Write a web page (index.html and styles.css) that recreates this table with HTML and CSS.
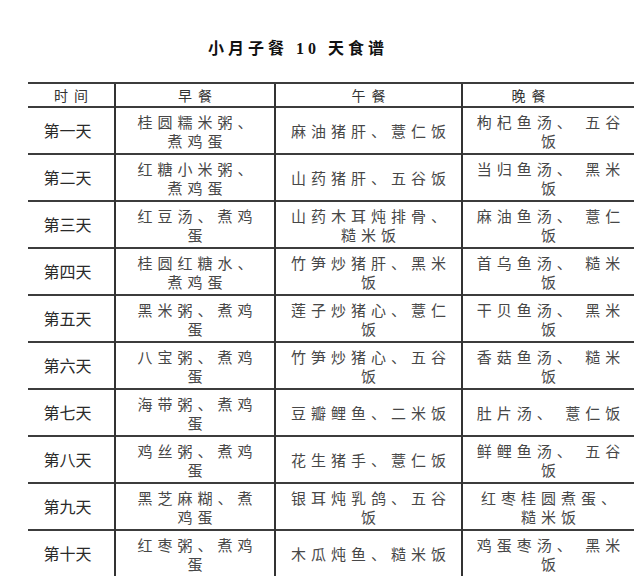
FILE: index.html
```html
<!DOCTYPE html>
<html lang="zh">
<head>
<meta charset="utf-8">
<link rel="stylesheet" href="styles.css">
</head>
<body>
<h1 class="title">小月子餐 10 天食谱</h1>
<table class="menu">
  <colgroup>
    <col class="c-day"><col class="c-b"><col class="c-l"><col class="c-d">
  </colgroup>
  <thead>
    <tr><th>时间</th><th>早餐</th><th>午餐</th><th class="h-dinner">晚餐</th></tr>
  </thead>
  <tbody>
    <tr><td class="day">第一天</td><td>桂圆糯米粥、<br>煮鸡蛋</td><td>麻油猪肝、薏仁饭</td><td>枸杞鱼汤、 五谷<br>饭</td></tr>
    <tr><td class="day">第二天</td><td>红糖小米粥、<br>煮鸡蛋</td><td>山药猪肝、五谷饭</td><td>当归鱼汤、 黑米<br>饭</td></tr>
    <tr><td class="day">第三天</td><td>红豆汤、煮鸡<br>蛋</td><td>山药木耳炖排骨、<br>糙米饭</td><td>麻油鱼汤、 薏仁<br>饭</td></tr>
    <tr><td class="day">第四天</td><td>桂圆红糖水、<br>煮鸡蛋</td><td>竹笋炒猪肝、黑米<br>饭</td><td>首乌鱼汤、 糙米<br>饭</td></tr>
    <tr><td class="day">第五天</td><td>黑米粥、煮鸡<br>蛋</td><td>莲子炒猪心、薏仁<br>饭</td><td>干贝鱼汤、 黑米<br>饭</td></tr>
    <tr><td class="day">第六天</td><td>八宝粥、煮鸡<br>蛋</td><td>竹笋炒猪心、五谷<br>饭</td><td>香菇鱼汤、 糙米<br>饭</td></tr>
    <tr><td class="day">第七天</td><td>海带粥、煮鸡<br>蛋</td><td>豆瓣鲤鱼、二米饭</td><td>肚片汤、 薏仁饭</td></tr>
    <tr><td class="day">第八天</td><td>鸡丝粥、煮鸡<br>蛋</td><td>花生猪手、薏仁饭</td><td>鲜鲤鱼汤、 五谷<br>饭</td></tr>
    <tr><td class="day">第九天</td><td>黑芝麻糊、煮<br>鸡蛋</td><td>银耳炖乳鸽、五谷<br>饭</td><td>红枣桂圆煮蛋、<br>糙米饭</td></tr>
    <tr class="last"><td class="day">第十天</td><td>红枣粥、煮鸡<br>蛋</td><td>木瓜炖鱼、糙米饭</td><td>鸡蛋枣汤、 黑米<br>饭</td></tr>
  </tbody>
</table>
</body>
</html>
```
FILE: styles.css
```css
html, body {
  margin: 0;
  padding: 0;
  background: #ffffff;
}
body {
  width: 640px;
  height: 577px;
  overflow: hidden;
}
.title {
  margin: 39px 0 0 208px;
  font-family: "Liberation Serif", "Noto Sans CJK SC", serif;
  font-weight: bold;
  font-size: 16px;
  line-height: 20px;
  letter-spacing: 4px;
  color: #111;
}
.menu {
  margin: 23px 0 0 28px;
  width: 606px;
  border-collapse: collapse;
  table-layout: fixed;
  font-family: "Noto Sans CJK SC", sans-serif;
}
.c-day { width: 87px; }
.c-b { width: 160px; }
.c-l { width: 187px; }
.c-d { width: 172px; }
.menu th,
.menu td {
  border-top: 2px solid #3c3c3c;
  border-left: 2px solid #333;
  padding: 0;
  text-align: center;
  vertical-align: middle;
}
.menu th:first-child,
.menu td:first-child {
  border-left: none;
}
.menu th {
  height: 22px;
  font-weight: 400;
  font-size: 14px;
  line-height: 18px;
  letter-spacing: 6px;
  padding-left: 6px;
  color: #333;
}
.menu th.h-dinner {
  padding-right: 40px;
}
.menu td {
  height: 45px;
  font-weight: 400;
  font-size: 15px;
  line-height: 19px;
  letter-spacing: 5px;
  padding-left: 5px;
  color: #474747;
}
.menu td.day {
  font-size: 16px;
  letter-spacing: 0;
  padding-left: 0;
  padding-right: 7px;
  color: #2a2a2a;
}
```
